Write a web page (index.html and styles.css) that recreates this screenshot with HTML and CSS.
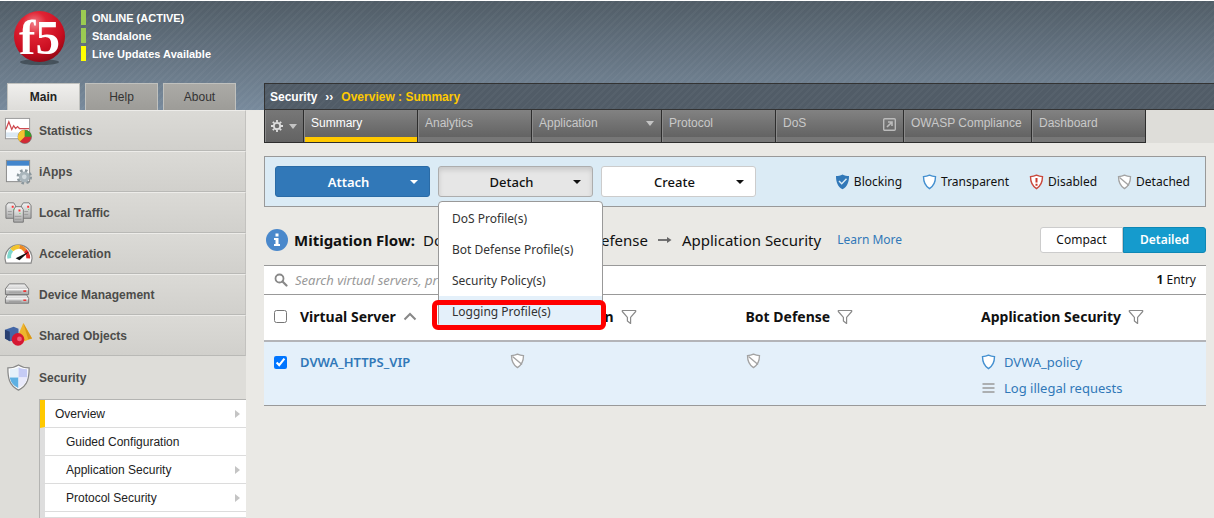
FILE: index.html
```html
<!DOCTYPE html>
<html lang="en">
<head>
<meta charset="utf-8">
<title>Security : Overview : Summary</title>
<link rel="stylesheet" href="styles.css">
</head>
<body>
<svg width="0" height="0" class="defs" aria-hidden="true">
  <defs>
    <radialGradient id="ball" cx=".4" cy=".25" r=".8"><stop offset="0" stop-color="#f0808a"/><stop offset=".3" stop-color="#e02333"/><stop offset=".7" stop-color="#c90d20"/><stop offset="1" stop-color="#8c0613"/></radialGradient>
    <linearGradient id="metal" x1="0" y1="0" x2="0" y2="1"><stop offset="0" stop-color="#f4f4f4"/><stop offset="1" stop-color="#a9a9a9"/></linearGradient>
    <symbol id="shield-off" viewBox="0 0 14 16"><path d="M7 1.200C5 2.200 3 2.600 1 2.600c0 5.200 1.500 9.400 6 12 4.500-2.600 6-6.800 6-12-2 0-4-.4-6-1.400z" fill="#fff" stroke="#a3a3a3" stroke-width="1.300"/><path d="M2 3.500 11.500 11.500" stroke="#a3a3a3" stroke-width="1.300"/></symbol>
    <symbol id="shield-open" viewBox="0 0 14 16"><path d="M7 1.200C5 2.200 3 2.600 1 2.600c0 5.200 1.500 9.400 6 12 4.500-2.600 6-6.800 6-12-2 0-4-.4-6-1.400z" fill="#fff" stroke="#4490d0" stroke-width="1.400"/></symbol>
    <symbol id="funnel" viewBox="0 0 16 16"><path d="M1.300 1.500h13.400v1L9.600 8.300v6.200L6.400 12V8.300L1.300 2.500z" fill="#fff" stroke="#8a8a8a" stroke-width="1.200" stroke-linejoin="round"/></symbol>
  </defs>
</svg>
<div class="page">
  <aside class="side">
    <header class="brand">
      <svg class="logo" viewBox="0 0 54 58" aria-label="f5"><ellipse cx="27" cy="53" rx="20" ry="3" fill="#2f3840" opacity=".6"/><circle cx="27" cy="27" r="26" fill="url(#ball)"/><text x="27" y="45" text-anchor="middle" class="logo-text">f5</text></svg>
      <ul class="status">
        <li>ONLINE (ACTIVE)</li>
        <li>Standalone</li>
        <li class="warn">Live Updates Available</li>
      </ul>
    </header>
    <nav class="tabs">
      <a href="#" class="on">Main</a><a href="#">Help</a><a href="#">About</a>
    </nav>
    <nav class="menu">
      <a href="#"><svg viewBox="0 0 30 30"><rect x="1.500" y="2.500" width="25" height="21" fill="#fff" stroke="#999"/><path d="M2 17h24v5H2z" fill="#dce9f3"/><path d="M2 14l3-8 3 8 2-4 2 3 2-2 2 2h10" fill="none" stroke="#cf4a50" stroke-width="1.300"/><circle cx="21.500" cy="21.500" r="7" fill="#d32a35" stroke="#666" stroke-width=".6"/><path d="M21.500 21.500v-7a7 7 0 0 0-5 12z" fill="#f2c530"/><path d="M21.500 21.500v-7a7 7 0 0 1 7 7z" fill="#33a02c"/></svg>Statistics</a>
      <a href="#"><svg viewBox="0 0 30 30"><rect x="2.500" y="3.500" width="24" height="22" fill="#f8fafc" stroke="#888"/><path d="M3 4h23v5H3z" fill="#4285cc"/><circle cx="21" cy="20.500" r="6.500" fill="none" stroke="#8b979d" stroke-width="3" stroke-dasharray="2.600 2.500"/><circle cx="21" cy="20.500" r="4" fill="#d2dade" stroke="#a9b5bb" stroke-width="3.200"/></svg>iApps</a>
      <a href="#"><svg viewBox="0 0 30 30" stroke="#777"><path d="M2 8l2-3h6l2 3v13H2z" fill="url(#metal)"/><path d="M18 8l2-3h6l2 3v13H18z" fill="url(#metal)"/><path d="M10 12l2-3h6l2 3v13h-10z" fill="url(#metal)"/><path d="M11 19h7m-7 3h7M4 14h4m-4 3h4m13-3h4m-4 3h4" stroke="#999"/><path d="M8 9h2m5 4h2m7-4h2" stroke="#f33" stroke-width="2"/><path d="M10 12h1m5 4h1m8-4h1" stroke="#5d5"/></svg>Local Traffic</a>
      <a href="#"><svg viewBox="0 0 30 30"><path d="M1 20a14 14 0 1 1 28 0l-1 5H2z" fill="#fff" stroke="#888" stroke-width="1.200"/><path d="M5.500 20A10 10 0 0 1 8 11.500" fill="none" stroke="#7fd6cc" stroke-width="4"/><path d="M8 11.500A10 10 0 0 1 16 8" fill="none" stroke="#f3c52d" stroke-width="4"/><path d="M16 8a10 10 0 0 1 6 4" fill="none" stroke="#ee8a22" stroke-width="4"/><path d="M22 12a10 10 0 0 1 3 8" fill="none" stroke="#e32626" stroke-width="4"/><path d="M12 20l14-7-10 9z" fill="#111"/></svg>Acceleration</a>
      <a href="#"><svg viewBox="0 0 30 30" stroke="#777"><path d="M1.500 9l4-5h16l4 5v6h-24z" fill="url(#metal)"/><path d="M1.500 19l2-3.500h20l2 3.500v5h-24z" fill="url(#metal)"/><path d="M2 10h23M2 19.500h23" stroke="#fff"/><path d="M5 12.500h13M5 22h13" stroke="#999"/><path d="M20 11.500h3M20 21h3" stroke="#e33" stroke-width="1.600"/></svg>Device Management</a>
      <a href="#"><svg viewBox="0 0 30 30"><path d="M1 9l9-3 5 2v12l-9 1-5-3z" fill="#4467a6"/><path d="M1 9l5 2v10l-5-3z" fill="#293f70"/><path d="M20 2l9 16-8 3-7-5z" fill="#eeb52e"/><path d="M20 2l9 16-4 1z" fill="#d89516"/><circle cx="14.500" cy="19" r="6.500" fill="#d51732"/><circle cx="16" cy="18.500" r="2.500" fill="#f0607a"/></svg>Shared Objects</a>
      <a href="#" class="open"><svg viewBox="0 0 30 30"><path d="M15 2c-3 2-7 3-11 3 0 10 1 18 11 23 10-5 11-13 11-23-4 0-8-1-11-3z" fill="#fff" stroke="#888" stroke-width="1.300"/><path d="M15 4.500c-3 1.500-6 2-9 2V15h9z" fill="#e6f1fa"/><path d="M15 4.500c3 1.500 6 2 9 2V15h-9z" fill="#c5cbf5"/><path d="M6 15h9v11c-6-3-8-6-9-11z" fill="#5fb0e2"/><path d="M24 15h-9v11c6-3 8-6 9-11z" fill="#e9eafb"/></svg>Security</a>
    </nav>
    <nav class="sub">
      <a href="#" class="current more">Overview</a>
      <a href="#">Guided Configuration</a>
      <a href="#" class="more">Application Security</a>
      <a href="#" class="more">Protocol Security</a>
      <div class="rest"></div>
    </nav>
  </aside>

  <main class="main">
    <div class="crumbs"><a href="#">Security</a><span>››</span><b>Overview : Summary</b></div>
    <nav class="bar">
      <button type="button" class="gear" aria-label="Preferences"><svg width="12" height="12" viewBox="0 0 12 12" fill="none" stroke="#ddd"><circle cx="6" cy="6" r="3.200" stroke-width="1.800"/><path d="M6 0v2M6 10v2M0 6h2M10 6h2M1.800 1.800l1.400 1.400M8.800 8.800l1.400 1.400M10.200 1.800 8.800 3.200M3.200 8.800l-1.400 1.400" stroke-width="1.800"/></svg><i class="tri"></i></button>
      <a href="#" class="on">Summary</a>
      <a href="#">Analytics</a>
      <a href="#" class="wider">Application<i class="tri"></i></a>
      <a href="#">Protocol</a>
      <a href="#" class="wide">DoS<svg width="13" height="13" viewBox="0 0 13 13" fill="none" stroke="#bbb"><rect x=".7" y=".7" width="11.600" height="11.600" rx="1" stroke-width="1.400"/><path d="M4 9l4.500-4.500M5 4h4v4" stroke-width="1.600"/></svg></a>
      <a href="#" class="wide">OWASP Compliance</a>
      <a href="#">Dashboard</a>
    </nav>

    <div class="content">
      <section class="tools">
        <button type="button" class="btn blue"><span>Attach</span><i class="caret"></i></button>
        <div class="drop">
          <button type="button" class="btn held" aria-expanded="true"><span>Detach</span><i class="caret"></i></button>
          <div class="list">
            <a href="#">DoS Profile(s)</a>
            <a href="#">Bot Defense Profile(s)</a>
            <a href="#">Security Policy(s)</a>
            <a href="#" class="hover">Logging Profile(s)</a>
            <div class="mark"></div>
          </div>
        </div>
        <button type="button" class="btn"><span>Create</span><i class="caret"></i></button>
        <ul class="legend">
          <li><svg class="shield" viewBox="0 0 14 16"><path d="M7 .5C5 1.600 2.500 2 .5 2c0 6 1.500 10.500 6.500 13.300C12 12.500 13.500 8 13.500 2 11.500 2 9 1.600 7 .5z" fill="#3178b8"/><path d="M3.500 7l2.700 2.700L11 4.800" fill="none" stroke="#dbebf5" stroke-width="1.400"/></svg>Blocking</li>
          <li><svg class="shield"><use href="#shield-open"/></svg>Transparent</li>
          <li><svg class="shield" viewBox="0 0 14 16"><path d="M7 1.200C5 2.200 3 2.600 1 2.600c0 5.200 1.500 9.400 6 12 4.500-2.600 6-6.800 6-12-2 0-4-.4-6-1.400z" fill="#fff" stroke="#c9483c" stroke-width="1.400"/><path d="M7 4v4.500M7 9.800v2" stroke="#c9382c" stroke-width="2"/></svg>Disabled</li>
          <li><svg class="shield"><use href="#shield-off"/></svg>Detached</li>
        </ul>
      </section>

      <section class="flow">
        <svg class="info" viewBox="0 0 22 22"><circle cx="11" cy="11" r="11" fill="#4a88cb"/><path d="M9.500 4.500h3v3h-3zM8 9h4.500v6H14v2H8v-2h1.500v-4H8z" fill="#fff"/></svg>
        <h1>Mitigation Flow:</h1>
        <span>DoS Protection</span>
        <svg class="arrow" viewBox="0 0 14 8"><path d="M0 4h10" stroke="#666" stroke-width="1.800"/><path d="M9 1l4.500 3L9 7z" fill="#666"/></svg>
        <span>Bot Defense</span>
        <svg class="arrow" viewBox="0 0 14 8"><path d="M0 4h10" stroke="#666" stroke-width="1.800"/><path d="M9 1l4.500 3L9 7z" fill="#666"/></svg>
        <span>Application Security</span>
        <a href="#" class="learn">Learn More</a>
        <div class="toggle"><button type="button">Compact</button><button type="button" class="on" aria-pressed="true">Detailed</button></div>
      </section>

      <section class="grid">
        <div class="search">
          <svg width="14" height="14" viewBox="0 0 14 14" fill="none" stroke="#888"><circle cx="5.500" cy="5.500" r="4" stroke-width="1.800"/><path d="M8.500 8.500l4 4" stroke-width="2.200" stroke-linecap="round"/></svg>
          <input type="search" aria-label="Search" placeholder="Search virtual servers, profiles, policies">
          <span><b>1</b> Entry</span>
        </div>
        <table>
          <colgroup><col class="c-check"><col class="c-name"><col class="c-col"><col class="c-col"><col></colgroup>
          <thead><tr>
            <th><input type="checkbox" aria-label="Select all"></th>
            <th><div class="cell">Virtual Server<svg width="14" height="9" viewBox="0 0 14 9"><path d="M1.500 7.500 7 2l5.500 5.500" fill="none" stroke="#888" stroke-width="2"/></svg></div></th>
            <th><div class="cell">DoS Protection<svg class="fun"><use href="#funnel"/></svg></div></th>
            <th><div class="cell">Bot Defense<svg class="fun"><use href="#funnel"/></svg></div></th>
            <th><div class="cell">Application Security<svg class="fun"><use href="#funnel"/></svg></div></th>
          </tr></thead>
          <tbody><tr>
            <td><input type="checkbox" checked aria-label="Select DVWA_HTTPS_VIP"></td>
            <td><a href="#" class="vip">DVWA_HTTPS_VIP</a></td>
            <td><svg class="shield"><use href="#shield-off"/></svg></td>
            <td><svg class="shield"><use href="#shield-off"/></svg></td>
            <td><a href="#" class="pol"><svg class="shield"><use href="#shield-open"/></svg>DVWA_policy</a><a href="#" class="pol"><svg class="shield" viewBox="0 0 14 16"><path d="M1 4h12M1 8h12M1 12h12" stroke="#999" stroke-width="1.400"/></svg>Log illegal requests</a></td>
          </tr></tbody>
        </table>
      </section>
    </div>
  </main>
</div>
</body>
</html>
```
FILE: styles.css
```css
* { box-sizing: border-box; }
body {
  margin: 0;
  font: 13px/20px "Noto Sans", "Open Sans", sans-serif;
  color: #111;
  background: #eae9e5;
}
.defs { position: absolute; }
a { color: inherit; text-decoration: none; }
ul { list-style: none; margin: 0; padding: 0; }
button { font: inherit; color: inherit; cursor: pointer; }

.page {
  display: grid;
  grid-template-columns: 246px 1fr;
  gap: 18px;
  height: 100vh;
  overflow: hidden;
  border-top: 1px solid #fff;
  background:
    repeating-linear-gradient(135deg, transparent 0 3px, rgba(255,255,255,.03) 3px 5px) top / 100% 109px no-repeat,
    linear-gradient(#515d67, #788a9c) top / 100% 109px no-repeat,
    #eae9e5;
}

/* Sidebar */
.side {
  display: flex;
  flex-direction: column;
  font-family: "Liberation Sans", Arial, sans-serif;
  background: linear-gradient(#deddd9, #deddd9) 0 109px no-repeat;
}
.brand { display: flex; gap: 15px; height: 82px; padding: 9px 0 0 13px; }
.logo { width: 53px; height: 57px; overflow: visible; }
.logo-text { font: bold 50px "Liberation Serif", serif; fill: #fff; }
.status { color: #fff; font-weight: bold; font-size: 11px; }
.status li { border-left: 5px solid #9bcb52; padding-left: 6px; height: 15px; line-height: 16px; margin-bottom: 3px; }
.status .warn { border-color: #ff0; }
.tabs { display: flex; gap: 5px; padding-left: 7px; }
.tabs a {
  width: 73px;
  height: 27px;
  line-height: 26px;
  text-align: center;
  color: #333;
  font-size: 12px;
  background: linear-gradient(#abaaa6, #9d9c98);
  border: 1px solid #c0c1be;
  border-bottom: 0;
}
.tabs .on { background: linear-gradient(#f0efed, #dddcd9); font-weight: bold; color: #222; }
.menu a {
  display: flex;
  align-items: center;
  gap: 6px;
  height: 41px;
  padding-left: 4px;
  font-weight: bold;
  font-size: 12px;
  color: #4c4c4a;
  border-top: 1px solid #edece9;
  border-bottom: 1px solid #b9b9b6;
  border-right: 1px solid #c3c2bf;
  background: linear-gradient(#dbdad6, #d1d0cc);
}
.menu svg { width: 29px; height: 29px; }
.menu .open { background: none; border-color: transparent; height: 43px; }
.sub {
  flex: 1;
  margin-left: 39px;
  border: 1px solid #b4b4b2;
  border-width: 1px 0 0 1px;
  font-size: 12px;
  display: flex;
  flex-direction: column;
}
.sub a, .rest {
  display: flex;
  align-items: center;
  height: 28px;
  flex: none;
  padding: 0 6px 0 21px;
  background: #fff;
  border-left: 5px solid #dedede;
  border-bottom: 1px solid #dcdcdc;
  color: #222;
}
.sub .current { border-left-color: #ffc900; padding-left: 10px; }
.sub .more::after {
  content: "";
  margin-left: auto;
  border: 4px solid transparent;
  border-left: 5px solid #c4c4c4;
  border-right: 0;
}
.sub .rest { flex: 1; min-height: 0; height: auto; }

/* Breadcrumb and tab bar */
.main { padding-top: 82px; min-width: 0; }
.crumbs {
  display: flex;
  align-items: center;
  gap: 8px;
  height: 27px;
  padding: 0 5px;
  border: 1px solid #333;
  border-right: 0;
  color: #fff;
  font: bold 12px "Liberation Sans", Arial, sans-serif;
  background: repeating-linear-gradient(135deg, transparent 0 3px, rgba(255,255,255,.03) 3px 5px), #515c67;
}
.crumbs b { color: #ffc900; }
.bar {
  display: flex;
  height: 33px;
  background: #deddd9;
  border-left: 1px solid #2d2d2d;
  font: 12px "Liberation Sans", Arial, sans-serif;
}
.bar a, .gear {
  display: flex;
  justify-content: space-between;
  width: 114px;
  padding: 5px 7px 0;
  line-height: 16px;
  color: #c9c9c9;
  border: solid #2d2d2d;
  border-width: 0 1px 1px 0;
  box-shadow: inset 1px 0 #8a8a8a;
  background: linear-gradient(#828282, #636363 27px, #777 27px);
}
.bar .gear { width: 39px; padding: 0 6px; align-items: center; background: linear-gradient(#777, #636363); }
.bar .wide { width: 128px; white-space: nowrap; }
.bar .wider { width: 130px; }
.bar .on { color: #fff; background: linear-gradient(#828282, #636363 27px, #ffc900 27px); }
.tri { border: 4px solid transparent; border-top: 5px solid #c4c4c4; border-bottom: 0; align-self: center; }
.bar a .tri { align-self: flex-start; margin-top: 6px; }
.bar a svg { margin-top: 3px; }

/* Action toolbar */
.content { padding: 13px 8px 0 0; }
.tools {
  display: flex;
  align-items: center;
  gap: 8px;
  height: 51px;
  padding: 0 15px 0 10px;
  background: #dbebf5;
  border: 1px solid #999;
}
.btn {
  display: flex;
  align-items: center;
  width: 155px;
  height: 31px;
  padding: 0 11px;
  font-weight: 500;
  background: #fff;
  border: 1px solid #ccc;
  border-radius: 3px;
}
.btn span { flex: 1; }
.caret { border: 4px solid transparent; border-top-color: currentColor; border-bottom: 0; }
.blue { color: #fff; font-weight: 600; background: #3178b8; border-color: #2a6ba6; }
.held { background: #e6e6e6; border-color: #adadad; box-shadow: inset 0 3px 5px rgba(0,0,0,.125); }
.drop { position: relative; }
.list {
  position: absolute;
  z-index: 2;
  top: 35px;
  left: 0;
  width: 165px;
  height: 126px;
  padding-top: 1px;
  background: #fff;
  border: 1px solid #999;
  border-radius: 4px;
}
.list a { display: block; height: 31px; line-height: 31px; padding-left: 13px; font-size: 12px; color: #333; }
.list .hover { background: #e4f0fa; height: 30px; }
.mark {
  position: absolute;
  left: -7px;
  right: -4px;
  bottom: -4px;
  height: 30px;
  border: 5px solid #f00;
  border-radius: 6px;
}
.legend { display: flex; gap: 20px; margin-left: auto; font-size: 12px; }
.legend li { display: flex; align-items: center; gap: 4px; }
.shield { width: 15px; height: 16px; vertical-align: middle; }

/* Mitigation flow */
.flow { display: flex; align-items: center; height: 58px; padding: 8px 0 0 2px; font-size: 15px; white-space: nowrap; }
.info { width: 22px; height: 22px; margin-right: 6px; }
.flow h1 { margin: 0 8px 0 0; font-size: 15px; }
.arrow { width: 14px; height: 8px; margin: 0 10px; }
.learn { margin-left: 16px; font-size: 12px; color: #3178b8; }
.toggle { display: flex; margin-left: auto; }
.toggle button { width: 83px; height: 26px; padding: 0; font-size: 12px; background: #fff; border: 1px solid #ccc; border-radius: 3px 0 0 3px; }
.toggle .on { color: #fff; font-weight: 600; background: #159bcd; border-color: #0e87b5; border-radius: 0 3px 3px 0; }

/* Virtual server table */
.search {
  display: flex;
  align-items: center;
  gap: 7px;
  height: 30px;
  padding: 0 10px;
  background: #fff;
  border: solid #999;
  border-width: 1px 0;
  font-size: 12px;
}
.search input { flex: 1; border: 0; padding: 0; outline: 0; background: none; font: italic 13px "Noto Sans", "Open Sans", sans-serif; }
.search input::placeholder { color: #999; }
table { width: 100%; border-collapse: collapse; table-layout: fixed; font-size: 14px; }
.c-check { width: 36px; }
.c-name { width: 210px; }
.c-col { width: 25%; }
th, td { padding: 0; text-align: left; vertical-align: top; }
th { height: 46px; padding-bottom: 2px; vertical-align: middle; background: #fff; border-bottom: 2px solid #b3b4b8; }
.cell { display: flex; align-items: center; gap: 7px; }
.fun { width: 16px; height: 16px; }
td { height: 64px; padding-top: 7px; background: #e4f0fa; border-bottom: 1px solid #999; font-size: 13px; color: #3178b8; }
td:first-child { padding-top: 14px; }
table input { display: block; width: 13px; height: 13px; margin: 0 0 0 10px; }
.vip { font-weight: 600; line-height: 26px; }
.pol { display: flex; align-items: center; gap: 8px; height: 26px; }
```
